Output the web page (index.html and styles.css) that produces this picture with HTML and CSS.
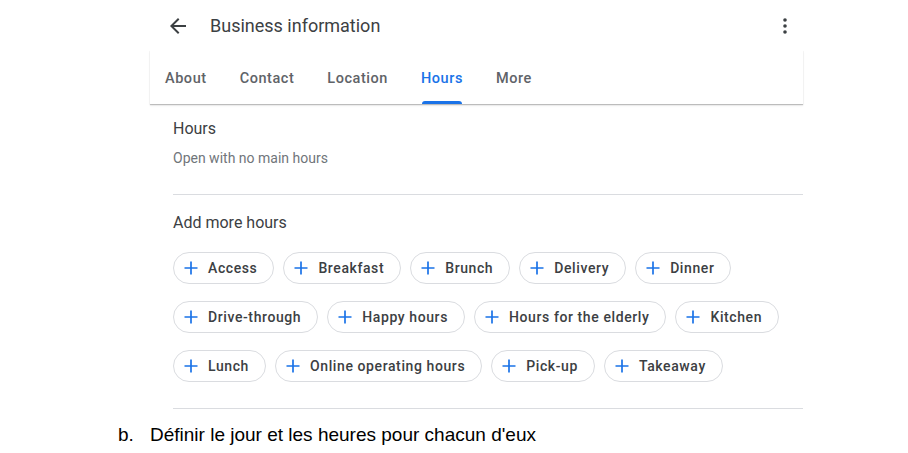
FILE: index.html
```html
<!DOCTYPE html>
<html>
<head>
<meta charset="utf-8">
<link rel="stylesheet" href="styles.css">
</head>
<body>
<div class="app">
  <div class="topbar">
    <svg class="back" width="24" height="24" viewBox="0 0 24 24"><path d="M20 11H7.83l5.59-5.59L12 4l-8 8 8 8 1.41-1.41L7.83 13H20v-2z" fill="#3c4043"/></svg>
    <div class="title">Business information</div>
    <svg class="kebab" width="24" height="24" viewBox="0 0 24 24"><circle cx="12" cy="6" r="1.8" fill="#3c4043"/><circle cx="12" cy="12" r="1.8" fill="#3c4043"/><circle cx="12" cy="18" r="1.8" fill="#3c4043"/></svg>
  </div>
  <div class="tabs">
    <div class="tab">About</div>
    <div class="tab">Contact</div>
    <div class="tab">Location</div>
    <div class="tab active">Hours</div>
    <div class="tab">More</div>
  </div>
  <div class="content">
    <div class="section">
      <div class="heading">Hours</div>
      <div class="sub">Open with no main hours</div>
    </div>
    <div class="section more">
      <div class="heading">Add more hours</div>
      <div class="chips">
        <div class="row">
          <div class="chip"><svg width="14" height="14" viewBox="0 0 14 14"><path d="M7 0.5v13M0.5 7h13" stroke="#1a73e8" stroke-width="1.7"/></svg>Access</div>
          <div class="chip"><svg width="14" height="14" viewBox="0 0 14 14"><path d="M7 0.5v13M0.5 7h13" stroke="#1a73e8" stroke-width="1.7"/></svg>Breakfast</div>
          <div class="chip"><svg width="14" height="14" viewBox="0 0 14 14"><path d="M7 0.5v13M0.5 7h13" stroke="#1a73e8" stroke-width="1.7"/></svg>Brunch</div>
          <div class="chip"><svg width="14" height="14" viewBox="0 0 14 14"><path d="M7 0.5v13M0.5 7h13" stroke="#1a73e8" stroke-width="1.7"/></svg>Delivery</div>
          <div class="chip"><svg width="14" height="14" viewBox="0 0 14 14"><path d="M7 0.5v13M0.5 7h13" stroke="#1a73e8" stroke-width="1.7"/></svg>Dinner</div>
        </div>
        <div class="row">
          <div class="chip"><svg width="14" height="14" viewBox="0 0 14 14"><path d="M7 0.5v13M0.5 7h13" stroke="#1a73e8" stroke-width="1.7"/></svg>Drive-through</div>
          <div class="chip"><svg width="14" height="14" viewBox="0 0 14 14"><path d="M7 0.5v13M0.5 7h13" stroke="#1a73e8" stroke-width="1.7"/></svg>Happy hours</div>
          <div class="chip"><svg width="14" height="14" viewBox="0 0 14 14"><path d="M7 0.5v13M0.5 7h13" stroke="#1a73e8" stroke-width="1.7"/></svg>Hours for the elderly</div>
          <div class="chip"><svg width="14" height="14" viewBox="0 0 14 14"><path d="M7 0.5v13M0.5 7h13" stroke="#1a73e8" stroke-width="1.7"/></svg>Kitchen</div>
        </div>
        <div class="row">
          <div class="chip"><svg width="14" height="14" viewBox="0 0 14 14"><path d="M7 0.5v13M0.5 7h13" stroke="#1a73e8" stroke-width="1.7"/></svg>Lunch</div>
          <div class="chip"><svg width="14" height="14" viewBox="0 0 14 14"><path d="M7 0.5v13M0.5 7h13" stroke="#1a73e8" stroke-width="1.7"/></svg>Online operating hours</div>
          <div class="chip"><svg width="14" height="14" viewBox="0 0 14 14"><path d="M7 0.5v13M0.5 7h13" stroke="#1a73e8" stroke-width="1.7"/></svg>Pick-up</div>
          <div class="chip"><svg width="14" height="14" viewBox="0 0 14 14"><path d="M7 0.5v13M0.5 7h13" stroke="#1a73e8" stroke-width="1.7"/></svg>Takeaway</div>
        </div>
      </div>
    </div>
  </div>
</div>
<p class="caption"><span class="marker">b.</span>Définir le jour et les heures pour chacun d'eux</p>
</body>
</html>
```

FILE: styles.css
```css
* { box-sizing: border-box; }
body {
  margin: 0;
  background: #fff;
  font-family: Roboto, "Noto Sans", sans-serif;
  color: #3c4043;
}
.app {
  width: 653px;
  margin-left: 150px;
}
.topbar {
  height: 50px;
  display: flex;
  align-items: center;
  padding-left: 16px;
  padding-right: 6px;
}
.back { flex: none; margin-top: 1px; }
.title {
  margin-left: 20px;
  font-size: 18px;
  color: #3c4043;
  flex: 1;
}
.kebab { flex: none; margin-top: 1px; }
.tabs {
  height: 54px;
  display: flex;
  gap: 33px;
  padding-left: 15px;
  box-shadow: 0 1px 1px rgba(0,0,0,0.22), 0 2px 2px rgba(0,0,0,0.06);
  position: relative;
}
.tab {
  height: 54px;
  line-height: 57px;
  font-size: 14.5px;
  font-weight: 500;
  letter-spacing: 0.55px;
  color: #5f6368;
  position: relative;
}
.tab.active { color: #1a73e8; }
.tab.active::after {
  content: "";
  position: absolute;
  left: 1px;
  right: 1px;
  bottom: 0;
  height: 3px;
  border-radius: 3px 3px 0 0;
  background: #1a73e8;
}
.content {
  padding-left: 23px;
}
.section {
  border-bottom: 1px solid #dadce0;
}
.section:first-child {
  padding-top: 14px;
  height: 91px;
}
.heading {
  font-size: 16px;
  line-height: 22px;
  color: #3c4043;
}
.sub {
  margin-top: 9px;
  font-size: 14px;
  line-height: 18px;
  color: #70757a;
}
.more {
  padding-top: 17px;
  height: 214px;
}
.chips {
  margin-top: 18px;
  display: flex;
  flex-direction: column;
  gap: 17px;
}
.row {
  display: flex;
  gap: 9px;
}
.chip {
  height: 32px;
  border: 1px solid #dadce0;
  border-radius: 16px;
  display: flex;
  align-items: center;
  gap: 10px;
  padding: 0 16px 0 10px;
  font-size: 14px;
  font-weight: 500;
  color: #3c4043;
  letter-spacing: 0.6px;
  white-space: nowrap;
}
.chip svg { flex: none; }
.caption {
  margin: 15px 0 0 118px;
  font-family: "Liberation Sans", Arial, sans-serif;
  font-size: 19px;
  color: #000;
  display: flex;
}
.marker { width: 32px; }
```
